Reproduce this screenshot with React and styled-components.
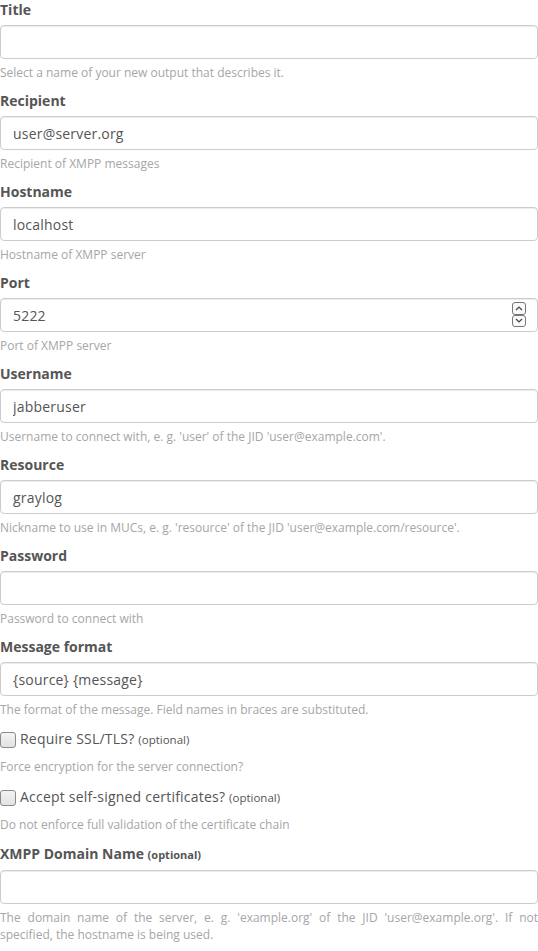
import React from "react";
import styled, { createGlobalStyle } from "styled-components";

const Global = createGlobalStyle`
  html, body { margin: 0; padding: 0; background: #fff; }
  body { font-family: "Open Sans", "DejaVu Sans", sans-serif; font-size: 14px; line-height: 1.42857; color: #555; }
  * { box-sizing: border-box; }
`;

const Form = styled.form`
  display: flex;
  flex-direction: column;
  width: 538px;
`;

const Group = styled.div`
  display: flex;
  flex-direction: column;
  margin-bottom: 10px;
`;

const Label = styled.label`
  font-weight: 700;
  font-size: 14px;
  line-height: 20px;
  color: #555;
  margin-bottom: 5px;
`;

const Optional = styled.small`
  font-size: ${(p) => (p.$bold ? "11px" : "11.5px")};
  font-weight: ${(p) => (p.$bold ? 700 : 400)};
  letter-spacing: 0;
  color: #555;
`;

const InputWrap = styled.div`
  position: relative;
`;

const Input = styled.input`
  display: block;
  width: 100%;
  height: 34px;
  padding: 6px 12px;
  font-family: inherit;
  font-size: 14px;
  line-height: 20px;
  letter-spacing: 0.2px;
  color: #555;
  background: #fff;
  border: 1px solid #ccc;
  border-radius: 4px;
  box-shadow: inset 0 1px 1px rgba(0, 0, 0, 0.075);
  outline: none;
`;

const Spinner = styled.div`
  position: absolute;
  right: 12px;
  top: 4px;
  width: 14px;
  height: 25px;
  display: flex;
  flex-direction: column;
`;

const SpinBtn = styled.div`
  flex: 1;
  border: 1px solid #777;
  border-radius: 3px;
  background: #fafafa;
  display: flex;
  align-items: center;
  justify-content: center;
`;

const Help = styled.span`
  display: block;
  margin-top: 5px;
  font-size: 12px;
  line-height: 17px;
  color: #a6a6a6;
  text-align: ${(p) => (p.$justify ? "justify" : "left")};
`;

const CheckGroup = styled.div`
  display: flex;
  flex-direction: column;
  margin-top: 1px;
  margin-bottom: 11px;
`;

const CheckLabel = styled.label`
  display: flex;
  align-items: center;
  gap: 4px;
  font-size: 14px;
  line-height: 20px;
  letter-spacing: 0.22px;
  color: #555;
  font-weight: 400;
`;

const Box = styled.span`
  display: inline-block;
  flex: none;
  width: 16px;
  height: 16px;
  border: 1px solid #8a8a8a;
  border-radius: 3px;
  background: linear-gradient(#f4f4f4, #e2e2e2);
`;

const CheckHelp = styled(Help)`
  margin-top: 8px;
`;

const Chevron = ({ up }) => (
  <svg width="8" height="5" viewBox="0 0 8 5">
    <path
      d={up ? "M1 4 L4 1 L7 4" : "M1 1 L4 4 L7 1"}
      fill="none"
      stroke="#444"
      strokeWidth="1.2"
    />
  </svg>
);

const Field = ({ label, value, help, optional, spinner, justify }) => (
  <Group>
    <Label>
      {label}
      {optional && (
        <>
          {" "}
          <Optional $bold>(optional)</Optional>
        </>
      )}
    </Label>
    <InputWrap>
      <Input defaultValue={value} type="text" />
      {spinner && (
        <Spinner>
          <SpinBtn>
            <Chevron up />
          </SpinBtn>
          <SpinBtn>
            <Chevron />
          </SpinBtn>
        </Spinner>
      )}
    </InputWrap>
    <Help $justify={justify}>{help}</Help>
  </Group>
);

const Check = ({ label, help }) => (
  <CheckGroup>
    <CheckLabel>
      <Box />
      <span>
        {label} <Optional>(optional)</Optional>
      </span>
    </CheckLabel>
    <CheckHelp>{help}</CheckHelp>
  </CheckGroup>
);

export default function App() {
  return (
    <>
      <Global />
      <Form>
        <Field label="Title" value="" help="Select a name of your new output that describes it." />
        <Field label="Recipient" value="user@server.org" help="Recipient of XMPP messages" />
        <Field label="Hostname" value="localhost" help="Hostname of XMPP server" />
        <Field label="Port" value="5222" help="Port of XMPP server" spinner />
        <Field
          label="Username"
          value="jabberuser"
          help="Username to connect with, e. g. 'user' of the JID 'user@example.com'."
        />
        <Field
          label="Resource"
          value="graylog"
          help="Nickname to use in MUCs, e. g. 'resource' of the JID 'user@example.com/resource'."
        />
        <Field label="Password" value="" help="Password to connect with" />
        <Field
          label="Message format"
          value="{source} {message}"
          help="The format of the message. Field names in braces are substituted."
        />
        <Check label="Require SSL/TLS?" help="Force encryption for the server connection?" />
        <Check
          label="Accept self-signed certificates?"
          help="Do not enforce full validation of the certificate chain"
        />
        <Field
          label="XMPP Domain Name"
          optional
          value=""
          justify
          help="The domain name of the server, e. g. 'example.org' of the JID 'user@example.org'. If not specified, the hostname is being used."
        />
      </Form>
    </>
  );
}
